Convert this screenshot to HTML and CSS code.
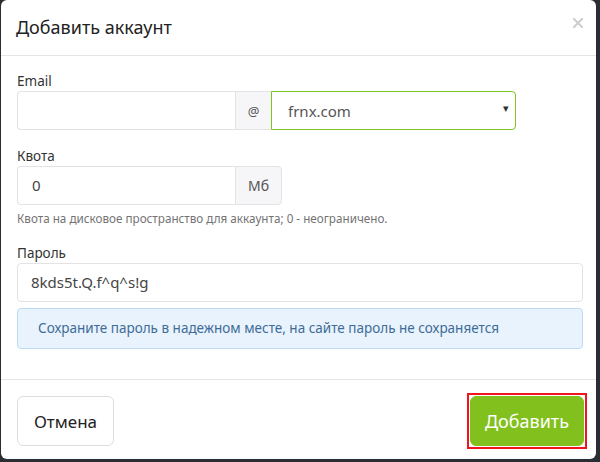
FILE: index.html
```html
<!DOCTYPE html>
<html lang="ru">
<head>
<meta charset="utf-8">
<title>Добавить аккаунт</title>
<link rel="stylesheet" href="styles.css">
</head>
<body>
<div class="modal">
  <div class="modal-header">
    <h4 class="modal-title">Добавить аккаунт</h4>
    <span class="close">
      <svg width="10" height="10" viewBox="0 0 10 10"><path d="M1 1L9 9M9 1L1 9" stroke="#cfcfcf" stroke-width="2.2" stroke-linecap="square"/></svg>
    </span>
  </div>
  <div class="modal-body">
    <div class="group">
      <label class="label">Email</label>
      <div class="input-group">
        <div class="input email-input"></div>
        <div class="addon at">@</div>
        <div class="select">
          <span>frnx.com</span>
          <span class="caret">▾</span>
        </div>
      </div>
    </div>
    <div class="group">
      <label class="label">Квота</label>
      <div class="input-group quota">
        <div class="input quota-input">0</div>
        <div class="addon mb">Мб</div>
      </div>
      <div class="help">Квота на дисковое пространство для аккаунта; 0 - неограничено.</div>
    </div>
    <div class="group last">
      <label class="label">Пароль</label>
      <div class="input pass">8kds5t.Q.f^q^s!g</div>
      <div class="alert">Сохраните пароль в надежном месте, на сайте пароль не сохраняется</div>
    </div>
  </div>
  <div class="modal-footer">
    <button class="btn btn-default">Отмена</button>
    <span class="highlight"><button class="btn btn-primary">Добавить</button></span>
  </div>
</div>
</body>
</html>
```

FILE: styles.css
```css
html, body {
  margin: 0;
  padding: 0;
}
body {
  background: #2a2e33;
  width: 600px;
  height: 462px;
  overflow: hidden;
  font-family: "Noto Sans", "Open Sans", sans-serif;
  color: #333;
}
.modal {
  margin-left: 1px;
  width: 595px;
  height: 459px;
  background: #fff;
  border-radius: 6px;
  display: flex;
  flex-direction: column;
  box-sizing: border-box;
}
.modal-header {
  height: 56px;
  box-sizing: border-box;
  border-bottom: 1px solid #e5e5e5;
  display: flex;
  align-items: center;
  justify-content: space-between;
  padding: 0 13px 0 15px;
}
.modal-title {
  margin: 0;
  font-size: 18px;
  font-weight: 400;
  color: #222;
  line-height: 24px;
  margin-top: -1px;
}
.close {
  display: flex;
  margin-top: -9px;
}
.modal-body {
  padding: 15px 13px 0 16px;
  flex: 1;
}
.group {
  margin-bottom: 16px;
}
.group.last {
  margin-bottom: 0;
}
.label {
  display: block;
  font-size: 13.5px;
  line-height: 20px;
  color: #333;
}
.input-group {
  display: flex;
  height: 39px;
}
.input-group.quota {
  width: 265px;
}
.input {
  box-sizing: border-box;
  height: 39px;
  border: 1px solid #e3e3e3;
  border-radius: 4px;
  font-size: 15px;
  line-height: 37px;
  padding: 0 14px;
  color: #444;
}
.email-input {
  width: 218px;
  border-radius: 4px 0 0 4px;
  border-right: 0;
}
.quota-input {
  width: 218px;
  border-radius: 4px 0 0 4px;
  border-right: 0;
}
.addon {
  box-sizing: border-box;
  height: 39px;
  background: #f6f6f8;
  border: 1px solid #e3e3e3;
  color: #555;
  font-size: 13px;
  display: flex;
  align-items: center;
  justify-content: center;
}
.addon.at {
  width: 36px;
  border-right: 0;
}
.addon.mb {
  width: 47px;
  font-size: 14px;
  border-radius: 0 4px 4px 0;
}
.select {
  box-sizing: border-box;
  width: 245px;
  height: 39px;
  border: 1px solid #80c31e;
  border-radius: 0 4px 4px 0;
  display: flex;
  align-items: center;
  justify-content: space-between;
  padding: 0 6px 0 16px;
  font-size: 15px;
  color: #555;
}
.caret {
  font-size: 11px;
  color: #333;
  margin-top: -6px;
}
.pass {
  width: 100%;
  padding-left: 13px;
}
.help {
  font-size: 11.7px;
  line-height: 18px;
  color: #737373;
  margin-top: 4px;
}
.alert {
  margin-top: 6px;
  box-sizing: border-box;
  height: 41px;
  background: #e8f3fd;
  border: 1px solid #bcdcf5;
  border-radius: 4px;
  color: #3f6c97;
  font-size: 13.5px;
  line-height: 39px;
  padding-left: 20px;
}
.modal-footer {
  height: 80px;
  box-sizing: border-box;
  border-top: 1px solid #e5e5e5;
  display: flex;
  align-items: center;
  justify-content: space-between;
  padding: 3px 9px 0 16px;
}
.btn {
  font-family: "Noto Sans", "Open Sans", sans-serif;
  height: 50px;
  border-radius: 6px;
  font-size: 17px;
  padding: 0;
  cursor: pointer;
  display: block;
}
.btn-default {
  width: 97px;
  background: #fff;
  border: 1px solid #dddddd;
  color: #222;
}
.highlight {
  display: block;
  border: 2px solid #f0141e;
  padding: 1px;
}
.btn-primary {
  width: 114px;
  background: #82c11d;
  border: 1px solid #82c11d;
  color: #fff;
  font-size: 18px;
}
```
